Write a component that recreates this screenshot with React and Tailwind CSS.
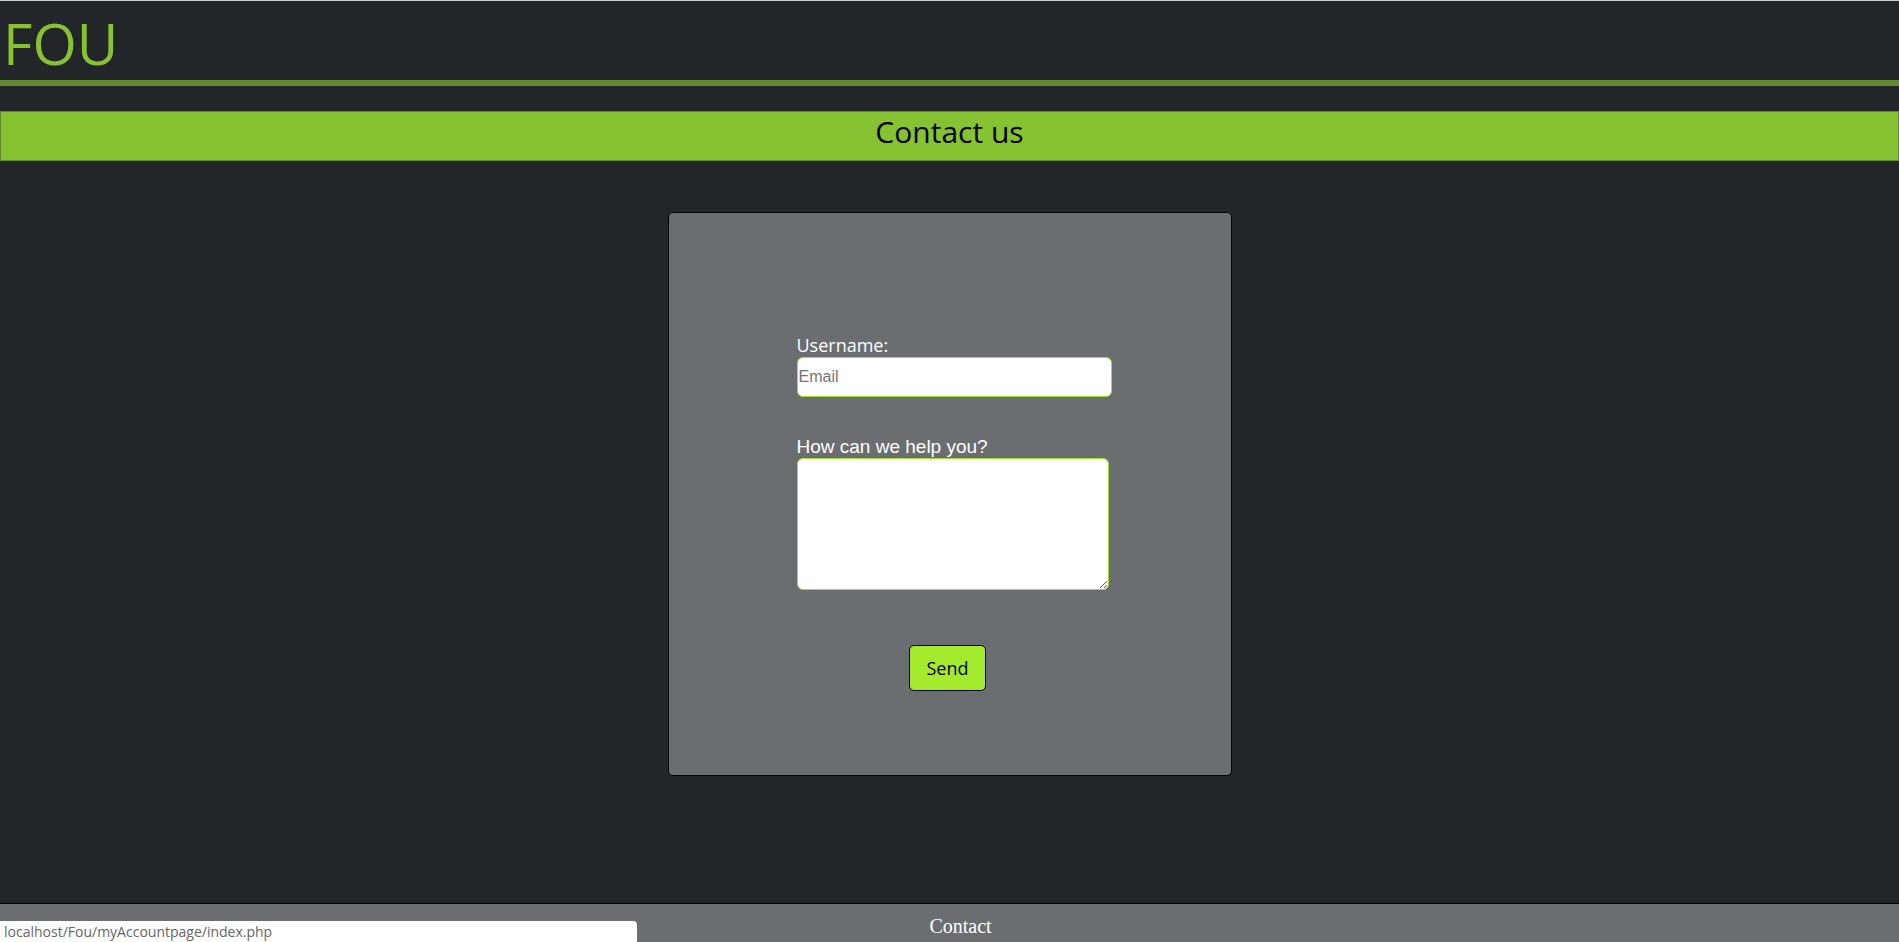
import React from "react";

export default function App() {
  return (
    <div className="relative flex h-[942px] flex-col overflow-hidden border-t border-[#cfcfcf] bg-[#222629]">
      {/* header */}
      <header className="h-[79px] pl-[3px] pt-[13px]">
        <h1 className="font-['Comic_Sans_MS','Open_Sans',sans-serif] text-[57px] font-normal leading-[58px] text-[#86c232]">
          FOU
        </h1>
      </header>
      <div className="h-[6px] bg-[#61892f]" />

      {/* page title */}
      <div className="mt-[25px] h-[50px] border border-[#61892f] bg-[#86c232]">
        <h2 className="text-center font-['Open_Sans',sans-serif] text-[30px] leading-[40px] text-black">
          Contact us
        </h2>
      </div>

      {/* contact form */}
      <div className="mx-auto mt-[51px] flex h-[564px] w-[564px] flex-col rounded-[5px] border border-black bg-[#6b6e70] pt-[120px]">
        <form className="flex flex-col" onSubmit={(e) => e.preventDefault()}>
          <div className="ml-[128px] flex flex-col">
            <label className="font-['Open_Sans',sans-serif] text-[18px] leading-[24px] text-white">
              Username:
            </label>
            <input
              type="text"
              placeholder="Email"
              className="h-[40px] w-[315px] rounded-[6px] border border-[#9fe02f] bg-white px-[1px] font-['Liberation_Sans',Arial,sans-serif] text-[16px] text-black placeholder:text-[#757575] outline-none"
            />

            <label className="mt-[39px] font-['Liberation_Sans',Arial,sans-serif] text-[19px] leading-[22px] text-white">
              How can we help you?
            </label>
            <textarea className="h-[132px] w-[312px] rounded-[6px] border border-[#9fe02f] bg-white outline-none" />
          </div>

          <button
            type="submit"
            className="mr-[4px] mt-[55px] h-[46px] self-center rounded-[5px] border border-black bg-[#a4eb2e] px-[16px] font-['Open_Sans',sans-serif] text-[18px] leading-[24px] text-black"
          >
            Send
          </button>
        </form>
      </div>

      {/* footer */}
      <footer className="mt-auto h-[39px] border-t border-black bg-[#6b6e70] pl-[22px] pt-[10px] text-center">
        <span className="font-['Liberation_Serif','Times_New_Roman',serif] text-[20px] leading-[24px] text-white">
          Contact
        </span>
      </footer>

      {/* browser status bubble */}
      <div className="absolute bottom-0 left-0 h-[21px] w-[637px] rounded-tr-[4px] bg-white pl-[4px] font-['Open_Sans',sans-serif] text-[14px] leading-[21px] text-[#666]">
        localhost/Fou/myAccountpage/index.php
      </div>
    </div>
  );
}
